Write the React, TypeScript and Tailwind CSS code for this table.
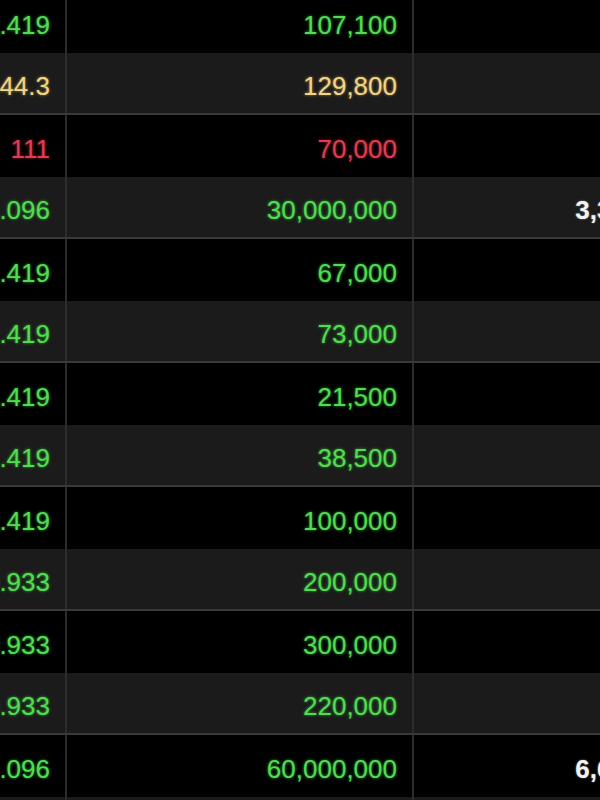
const tone = {
  up: "text-[#55da55] [text-shadow:0_0_3px_rgba(50,220,50,0.8)]",
  ref: "text-[#efd58a] [text-shadow:0_0_3px_rgba(230,180,80,0.75)]",
  down: "text-[#e03d50] [text-shadow:0_0_3px_rgba(220,40,60,0.75)]",
} as const;

type Row = {
  price: string;
  volume: string;
  tone: keyof typeof tone;
  value?: string;
};

const rows: Row[] = [
  { price: "101.419", volume: "107,100", tone: "up" },
  { price: "144.3", volume: "129,800", tone: "ref" },
  { price: "111", volume: "70,000", tone: "down" },
  { price: "101.096", volume: "30,000,000", tone: "up", value: "3,300,000" },
  { price: "101.419", volume: "67,000", tone: "up" },
  { price: "101.419", volume: "73,000", tone: "up" },
  { price: "101.419", volume: "21,500", tone: "up" },
  { price: "101.419", volume: "38,500", tone: "up" },
  { price: "101.419", volume: "100,000", tone: "up" },
  { price: "100.933", volume: "200,000", tone: "up" },
  { price: "100.933", volume: "300,000", tone: "up" },
  { price: "100.933", volume: "220,000", tone: "up" },
  { price: "101.096", volume: "60,000,000", tone: "up", value: "6,600,000" },
  { price: "", volume: "", tone: "up" },
];

export default function App() {
  return (
    <div className="w-[600px] h-[800px] overflow-hidden bg-black font-['Liberation_Sans',Arial,sans-serif] text-[26px] leading-none">
      <div className="-mt-[9px]">
        {rows.map((row, i) => {
          const striped = i % 2 === 1;
          return (
            <div
              key={i}
              className={`flex h-[62px] w-[707px] ${
                striped ? "bg-[#1b1b1b] border-b-2 border-[#3a3a3a]" : "bg-black"
              }`}
            >
              <div className="flex w-[67px] shrink-0 items-center justify-end overflow-hidden whitespace-nowrap border-r-2 border-[#2c2c2c] pt-[5px] pr-[15px]">
                <span className={`shrink-0 ${tone[row.tone]}`}>{row.price}</span>
              </div>
              <div className="flex w-[347px] shrink-0 items-center justify-end whitespace-nowrap border-r-2 border-[#2c2c2c] pt-[5px] pr-[15px]">
                <span className={tone[row.tone]}>{row.volume}</span>
              </div>
              <div className="flex w-[293px] shrink-0 items-center justify-end whitespace-nowrap pt-[5px] pr-[16px]">
                {row.value && (
                  <span className="font-bold text-[#f2f2f2] [text-shadow:0_0_2px_rgba(255,255,255,0.5)]">
                    {row.value}
                  </span>
                )}
              </div>
            </div>
          );
        })}
      </div>
    </div>
  );
}
